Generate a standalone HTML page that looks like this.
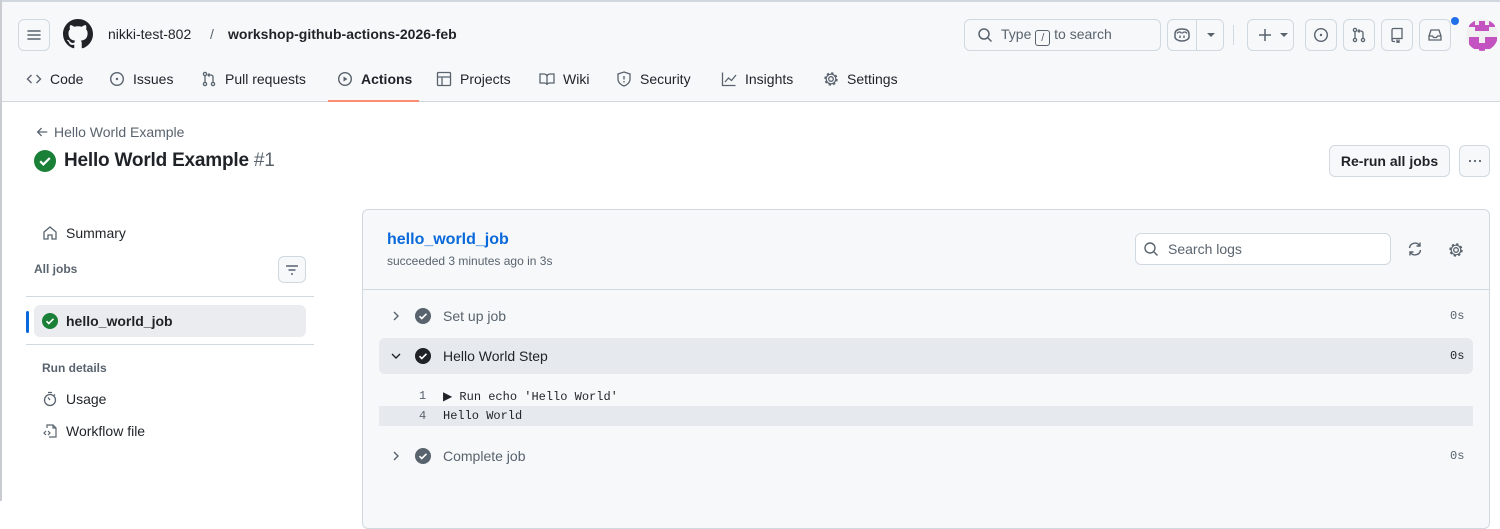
<!DOCTYPE html>
<html><head><style>
*{box-sizing:border-box;margin:0;padding:0}
body{width:1500px;height:501px;overflow:hidden;background:#fff;font-family:"Liberation Sans",sans-serif;color:#1f2328;position:relative;font-size:14px}
.a{position:absolute}
.btn{position:absolute;border:1px solid #d1d9e0;border-radius:6px;background:#f6f8fa}
svg{display:block}
.mono{font-family:"Liberation Mono",monospace;font-size:12px}
.nav{position:absolute;top:71px;font-size:14px;color:#1f2328;display:flex;align-items:center;gap:8px}
</style></head><body>
<div class="a" style="left:0;top:0;width:1500px;height:2px;background:#d0d7de"></div>
<div class="a" style="left:0;top:0;width:2px;height:501px;background:#c9ccd0"></div>
<div class="a" style="left:2px;top:2px;width:1498px;height:100px;background:#f6f8fa;border-bottom:1px solid #d1d9e0"></div>
<div class="btn" style="left:18px;top:19px;width:32px;height:32px;display:flex;align-items:center;justify-content:center"><svg width="16" height="16" viewBox="0 0 16 16"><path d="M2 4h12M2 8h12M2 12h12" stroke="#59636e" stroke-width="1.5" stroke-linecap="round"/></svg></div>
<svg class="a" style="left:63px;top:19px" width="30" height="30" viewBox="0 0 16 16"><path fill="#1f2328" d="M8 0C3.58 0 0 3.580 0 8c0 3.54 2.29 6.53 5.47 7.590.4.07.55-.17.55-.38 0-.19-.01-.82-.01-1.49-2.010.37-2.530-.49-2.690-.94-.09-.23-.48-.94-.82-1.13-.28-.15-.68-.52-.01-.53.63-.01 1.080.58 1.230.82.72 1.210 1.870.87 2.330.66.07-.52.28-.87.51-1.07-1.780-.2-3.640-.89-3.640-3.95 0-.87.31-1.590.82-2.150-.08-.2-.36-1.020.08-2.120 0 0 .67-.21 2.200.82.64-.18 1.320-.27 2-.27.68 0 1.360.09 2 .27 1.530-1.040 2.200-.82 2.200-.82.44 1.100.16 1.920.08 2.120.51.56.82 1.270.82 2.150 0 3.070-1.870 3.750-3.650 3.950.29.25.54.73.54 1.480 0 1.070-.01 1.930-.01 2.200 0 .21.15.46.55.38A8.013 8.013 0 0016 8c0-4.420-3.580-8-8-8z"/></svg>
<div class="a" style="left:108px;top:26px;font-size:14px">nikki-test-802</div>
<div class="a" style="left:210px;top:26px;font-size:14px;color:#59636e">/</div>
<div class="a" style="left:228px;top:26px;font-size:14px;font-weight:bold">workshop-github-actions-2026-feb</div>
<div class="btn" style="left:964px;top:19px;width:197px;height:32px"></div>
<svg class="a" style="left:977px;top:27px" width="16" height="16" viewBox="0 0 16 16"><circle cx="7" cy="7" r="5" stroke="#59636e" stroke-width="1.5" fill="none"/><path d="M11 11l3.5 3.5" stroke="#59636e" stroke-width="1.5"/></svg>
<div class="a" style="left:1001px;top:26px;color:#59636e">Type <span style="display:inline-block;border:1px solid #59636e;border-radius:3px;width:15px;height:16px;font-size:11px;text-align:center;line-height:14px;vertical-align:-2px">/</span> to search</div>
<div class="btn" style="left:1167px;top:19px;width:57px;height:32px"></div>
<div class="a" style="left:1196px;top:19px;width:1px;height:32px;background:#d1d9e0"></div>
<svg class="a" style="left:1173px;top:27px" width="18" height="16" viewBox="0 0 18 16"><path d="M2 7c0-3 2-5 7-5s7 2 7 5v3c0 2-3 4-7 4s-7-2-7-4z" fill="none" stroke="#59636e" stroke-width="1.5"/><path d="M4 6.5c1-2 4-2 4.5 0M9.5 6.5c.5-2 3.5-2 4.5 0" fill="none" stroke="#59636e" stroke-width="1.3"/><rect x="6.3" y="8.5" width="1.4" height="2.5" fill="#59636e"/><rect x="10.3" y="8.5" width="1.4" height="2.5" fill="#59636e"/></svg>
<div class="a" style="left:1207px;top:33px;border-left:4px solid transparent;border-right:4px solid transparent;border-top:4px solid #59636e"></div>
<div class="a" style="left:1233px;top:25px;width:1px;height:20px;background:#d1d9e0"></div>
<div class="btn" style="left:1247px;top:19px;width:47px;height:32px"></div>
<svg class="a" style="left:1257px;top:27px" width="16" height="16" viewBox="0 0 16 16"><path d="M8 2v12M2 8h12" stroke="#59636e" stroke-width="1.5"/></svg>
<div class="a" style="left:1280px;top:33px;border-left:4px solid transparent;border-right:4px solid transparent;border-top:4px solid #59636e"></div>
<div class="btn" style="left:1305px;top:19px;width:32px;height:32px"></div>
<svg class="a" style="left:1313px;top:27px" width="16" height="16" viewBox="0 0 16 16"><circle cx="8" cy="8" r="6.3" fill="none" stroke="#59636e" stroke-width="1.4"/><circle cx="8" cy="8" r="1.2" fill="#59636e"/></svg>
<div class="btn" style="left:1343px;top:19px;width:32px;height:32px"></div>
<svg class="a" style="left:1351px;top:27px" width="16" height="16" viewBox="0 0 16 16"><circle cx="4" cy="3" r="1.6" fill="none" stroke="#59636e" stroke-width="1.3"/><circle cx="4" cy="13" r="1.6" fill="none" stroke="#59636e" stroke-width="1.3"/><circle cx="12" cy="13" r="1.6" fill="none" stroke="#59636e" stroke-width="1.3"/><path d="M4 5v6M12 11V6c0-1-1-2-2-2H7M8.5 2.5L7 4l1.5 1.5" fill="none" stroke="#59636e" stroke-width="1.3"/></svg>
<div class="btn" style="left:1381px;top:19px;width:32px;height:32px"></div>
<svg class="a" style="left:1389px;top:27px" width="16" height="16" viewBox="0 0 16 16"><path d="M3 13V3c0-1 .7-1.5 1.5-1.5H13v10H4.5C3.7 11.5 3 12 3 13s.7 1.5 1.5 1.5H6M8 12.5v3l1-1 1 1v-3" fill="none" stroke="#59636e" stroke-width="1.3"/></svg>
<div class="btn" style="left:1419px;top:19px;width:32px;height:32px"></div>
<svg class="a" style="left:1427px;top:27px" width="16" height="16" viewBox="0 0 16 16"><path d="M2 9l2-6h8l2 6v4H2zM2 9h3.5l1 1.5h3l1-1.5H14" fill="none" stroke="#59636e" stroke-width="1.3"/></svg>
<div class="a" style="left:1451px;top:17px;width:8px;height:8px;border-radius:50%;background:#1f6feb"></div>
<div class="a" style="left:1466px;top:19px;width:32px;height:32px;border-radius:50%;background:#f0f0f0;overflow:hidden">
<div class="a" style="left:3px;top:2px;width:6px;height:6px;background:#c453c2"></div>
<div class="a" style="left:23px;top:2px;width:6px;height:6px;background:#c453c2"></div>
<div class="a" style="left:9px;top:6px;width:14px;height:6px;background:#c453c2"></div>
<div class="a" style="left:13px;top:2px;width:6px;height:10px;background:#c453c2"></div>
<div class="a" style="left:3px;top:18px;width:10px;height:12px;background:#c453c2"></div>
<div class="a" style="left:19px;top:18px;width:12px;height:12px;background:#c453c2"></div>
<div class="a" style="left:13px;top:24px;width:6px;height:8px;background:#c453c2"></div>
</div>
<div class="nav" style="left:26px"><svg width="16" height="16" viewBox="0 0 16 16"><path d="M5.5 4L1.5 8l4 4M10.5 4l4 4-4 4" fill="none" stroke="#59636e" stroke-width="1.4"/></svg>Code</div>
<div class="nav" style="left:109px"><svg width="16" height="16" viewBox="0 0 16 16"><circle cx="8" cy="8" r="6.3" fill="none" stroke="#59636e" stroke-width="1.4"/><circle cx="8" cy="8" r="1.2" fill="#59636e"/></svg>Issues</div>
<div class="nav" style="left:201px"><svg width="16" height="16" viewBox="0 0 16 16"><circle cx="4" cy="3" r="1.6" fill="none" stroke="#59636e" stroke-width="1.3"/><circle cx="4" cy="13" r="1.6" fill="none" stroke="#59636e" stroke-width="1.3"/><circle cx="12" cy="13" r="1.6" fill="none" stroke="#59636e" stroke-width="1.3"/><path d="M4 5v6M12 11V6c0-1-1-2-2-2H7M8.5 2.5L7 4l1.5 1.5" fill="none" stroke="#59636e" stroke-width="1.3"/></svg>Pull requests</div>
<div class="nav" style="left:337px;font-weight:bold"><svg width="16" height="16" viewBox="0 0 16 16"><circle cx="8" cy="8" r="6.3" fill="none" stroke="#59636e" stroke-width="1.4"/><path d="M6.5 5.5v5l4-2.5z" fill="#59636e"/></svg>Actions</div>
<div class="a" style="left:328px;top:100px;width:91px;height:2px;background:#fd8c73"></div>
<div class="nav" style="left:436px"><svg width="16" height="16" viewBox="0 0 16 16"><rect x="1.5" y="1.5" width="13" height="13" rx="1" fill="none" stroke="#59636e" stroke-width="1.3"/><path d="M1.5 6h13M6 6v8.5" stroke="#59636e" stroke-width="1.3"/></svg>Projects</div>
<div class="nav" style="left:539px"><svg width="16" height="16" viewBox="0 0 16 16"><path d="M1 3h4c1.5 0 3 1 3 2.5V14c0-1-1-2-2.5-2H1zM15 3h-4C9.5 3 8 4 8 5.5V14c0-1 1-2 2.5-2H15z" fill="none" stroke="#59636e" stroke-width="1.3"/></svg>Wiki</div>
<div class="nav" style="left:616px"><svg width="16" height="16" viewBox="0 0 16 16"><path d="M8 1l6 2v5c0 3.5-3 6-6 7-3-1-6-3.5-6-7V3z" fill="none" stroke="#59636e" stroke-width="1.3"/><path d="M8 5v3.5" stroke="#59636e" stroke-width="1.4"/><circle cx="8" cy="10.8" r=".8" fill="#59636e"/></svg>Security</div>
<div class="nav" style="left:721px"><svg width="16" height="16" viewBox="0 0 16 16"><path d="M1.5 1.5v13h13M4 11l3.5-4 3 2.5L15 4" fill="none" stroke="#59636e" stroke-width="1.3"/></svg>Insights</div>
<div class="nav" style="left:823px"><svg width="16" height="16" viewBox="0 0 16 16"><circle cx="8" cy="8" r="2.3" fill="none" stroke="#59636e" stroke-width="1.3"/><circle cx="8" cy="8" r="5.6" fill="none" stroke="#59636e" stroke-width="2.2" stroke-dasharray="2.2 2.2"/><circle cx="8" cy="8" r="4.8" fill="none" stroke="#59636e" stroke-width="1.2"/></svg>Settings</div>
<svg class="a" style="left:35px;top:125px" width="14" height="14" viewBox="0 0 16 16"><path d="M14 8H3M7.5 3.5L3 8l4.5 4.5" fill="none" stroke="#59636e" stroke-width="1.5"/></svg>
<div class="a" style="left:54px;top:124px;font-size:14px;color:#59636e">Hello World Example</div>
<svg class="a" style="left:34px;top:150px" width="22" height="22" viewBox="0 0 16 16"><circle cx="8" cy="8" r="8" fill="#1a7f37"/><path d="M4.5 8.2l2.3 2.3 4.7-4.7" fill="none" stroke="#fff" stroke-width="1.6"/></svg>
<div class="a" style="left:64px;top:150px;font-size:19px;font-weight:bold;letter-spacing:-0.2px">Hello World Example <span style="font-weight:normal;color:#59636e">#1</span></div>
<div class="btn" style="left:1329px;top:145px;width:121px;height:32px;font-weight:bold;font-size:14px;text-align:center;line-height:30px">Re-run all jobs</div>
<div class="btn" style="left:1459px;top:145px;width:31px;height:32px"></div>
<svg class="a" style="left:1467px;top:153px" width="16" height="16" viewBox="0 0 16 16"><circle cx="3" cy="8" r="1.1" fill="#59636e"/><circle cx="8" cy="8" r="1.1" fill="#59636e"/><circle cx="13" cy="8" r="1.1" fill="#59636e"/></svg>
<svg class="a" style="left:42px;top:225px" width="16" height="16" viewBox="0 0 16 16"><path d="M2 7l6-5 6 5v7H10v-4H6v4H2z" fill="none" stroke="#59636e" stroke-width="1.3"/></svg>
<div class="a" style="left:66px;top:225px">Summary</div>
<div class="a" style="left:34px;top:262px;font-size:12px;font-weight:bold;color:#59636e">All jobs</div>
<div class="btn" style="left:278px;top:256px;width:28px;height:27px"></div>
<svg class="a" style="left:284px;top:262px" width="16" height="16" viewBox="0 0 16 16"><path d="M2 4h12M4.5 8h7M7 12h2" stroke="#59636e" stroke-width="1.4"/></svg>
<div class="a" style="left:26px;top:296px;width:288px;height:1px;background:#d1d9e0"></div>
<div class="a" style="left:26px;top:311px;width:3px;height:22px;background:#0969da;border-radius:2px"></div>
<div class="a" style="left:34px;top:305px;width:272px;height:32px;background:#eaecef;border-radius:6px"></div>
<svg class="a" style="left:42px;top:313px" width="16" height="16" viewBox="0 0 16 16"><circle cx="8" cy="8" r="8" fill="#1a7f37"/><path d="M4.5 8.2l2.3 2.3 4.7-4.7" fill="none" stroke="#fff" stroke-width="1.6"/></svg>
<div class="a" style="left:66px;top:313px;font-weight:bold">hello_world_job</div>
<div class="a" style="left:26px;top:344px;width:288px;height:1px;background:#d1d9e0"></div>
<div class="a" style="left:42px;top:361px;font-size:12px;font-weight:bold;color:#59636e">Run details</div>
<svg class="a" style="left:42px;top:391px" width="16" height="16" viewBox="0 0 16 16"><circle cx="8" cy="9" r="5.5" fill="none" stroke="#59636e" stroke-width="1.3"/><path d="M6 1.5h4M8 9L6 6.5M13 3.5l-1 1" stroke="#59636e" stroke-width="1.3"/></svg>
<div class="a" style="left:66px;top:391px">Usage</div>
<svg class="a" style="left:42px;top:423px" width="16" height="16" viewBox="0 0 16 16"><path d="M5 5V2h6l3 3v9H7M11 2v3h3M4 8l-2 2 2 2M6 8l2 2-2 2" fill="none" stroke="#59636e" stroke-width="1.2"/></svg>
<div class="a" style="left:66px;top:423px">Workflow file</div>
<div class="a" style="left:362px;top:209px;width:1128px;height:320px;background:#f6f8fa;border:1px solid #d1d9e0;border-radius:6px"></div>
<div class="a" style="left:363px;top:289px;width:1126px;height:1px;background:#d1d9e0"></div>
<div class="a" style="left:387px;top:231px;font-size:16px;font-weight:bold;color:#0969da">hello_world_job</div>
<div class="a" style="left:387px;top:254px;font-size:12px;color:#59636e">succeeded 3 minutes ago in 3s</div>
<div class="a" style="left:1135px;top:233px;width:256px;height:32px;background:#fff;border:1px solid #d1d9e0;border-radius:6px"></div>
<svg class="a" style="left:1143px;top:241px" width="16" height="16" viewBox="0 0 16 16"><circle cx="7" cy="7" r="5" stroke="#59636e" stroke-width="1.4" fill="none"/><path d="M11 11l3.5 3.5" stroke="#59636e" stroke-width="1.4"/></svg>
<div class="a" style="left:1168px;top:241px;color:#59636e">Search logs</div>
<svg class="a" style="left:1407px;top:241px" width="16" height="16" viewBox="0 0 16 16"><path d="M2.5 7A5.5 5.5 0 0112.5 4.5M13.5 9A5.5 5.5 0 013.5 11.5" fill="none" stroke="#59636e" stroke-width="1.4"/><path d="M13 1.5v3.5H9.5M3 14.5V11h3.5" fill="none" stroke="#59636e" stroke-width="1.4"/></svg>
<svg class="a" style="left:1448px;top:242px" width="16" height="16" viewBox="0 0 16 16"><circle cx="8" cy="8" r="2.3" fill="none" stroke="#59636e" stroke-width="1.3"/><circle cx="8" cy="8" r="5.6" fill="none" stroke="#59636e" stroke-width="2.2" stroke-dasharray="2.2 2.2"/><circle cx="8" cy="8" r="4.8" fill="none" stroke="#59636e" stroke-width="1.2"/></svg>
<svg class="a" style="left:388px;top:308px" width="16" height="16" viewBox="0 0 16 16"><path d="M6 4l4 4-4 4" fill="none" stroke="#59636e" stroke-width="1.4"/></svg>
<svg class="a" style="left:415px;top:308px" width="16" height="16" viewBox="0 0 16 16"><circle cx="8" cy="8" r="8" fill="#59636e"/><path d="M4.5 8.2l2.3 2.3 4.7-4.7" fill="none" stroke="#fff" stroke-width="1.6"/></svg>
<div class="a" style="left:443px;top:308px;color:#59636e">Set up job</div>
<div class="a mono" style="left:1450px;top:309px;color:#59636e">0s</div>
<div class="a" style="left:379px;top:338px;width:1094px;height:36px;background:#e6e9ed;border-radius:6px"></div>
<svg class="a" style="left:388px;top:348px" width="16" height="16" viewBox="0 0 16 16"><path d="M4 6l4 4 4-4" fill="none" stroke="#1f2328" stroke-width="1.4"/></svg>
<svg class="a" style="left:415px;top:348px" width="16" height="16" viewBox="0 0 16 16"><circle cx="8" cy="8" r="8" fill="#1f2328"/><path d="M4.5 8.2l2.3 2.3 4.7-4.7" fill="none" stroke="#fff" stroke-width="1.6"/></svg>
<div class="a" style="left:443px;top:348px;color:#1f2328">Hello World Step</div>
<div class="a mono" style="left:1450px;top:349px;color:#1f2328">0s</div>
<div class="a mono" style="left:419px;top:389px;color:#59636e">1</div>
<div class="a mono" style="left:443px;top:389px">&#9654; Run echo 'Hello World'</div>
<div class="a" style="left:379px;top:406px;width:1094px;height:20px;background:#e6e9ed"></div>
<div class="a mono" style="left:419px;top:409px;color:#59636e">4</div>
<div class="a mono" style="left:443px;top:409px">Hello World</div>
<svg class="a" style="left:388px;top:448px" width="16" height="16" viewBox="0 0 16 16"><path d="M6 4l4 4-4 4" fill="none" stroke="#59636e" stroke-width="1.4"/></svg>
<svg class="a" style="left:415px;top:448px" width="16" height="16" viewBox="0 0 16 16"><circle cx="8" cy="8" r="8" fill="#59636e"/><path d="M4.5 8.2l2.3 2.3 4.7-4.7" fill="none" stroke="#fff" stroke-width="1.6"/></svg>
<div class="a" style="left:443px;top:448px;color:#59636e">Complete job</div>
<div class="a mono" style="left:1450px;top:449px;color:#59636e">0s</div>
</body></html>
